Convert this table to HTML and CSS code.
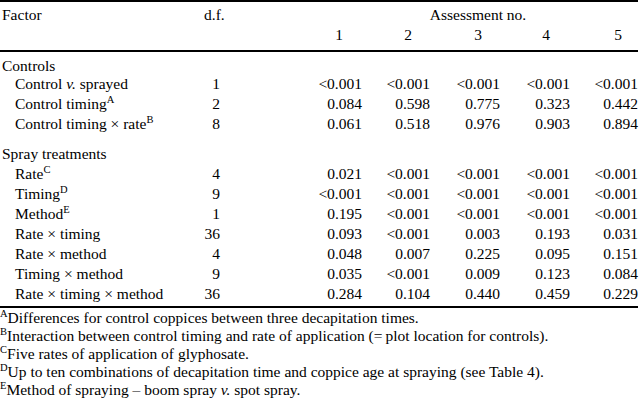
FILE: index.html
```html
<!DOCTYPE html>
<html>
<head>
<meta charset="utf-8">
<link rel="stylesheet" href="styles.css">
</head>
<body>
<table class="anova">
<colgroup>
<col class="w-factor"><col class="w-df"><col class="w-c1"><col class="w-c2"><col class="w-c3"><col class="w-c4"><col class="w-c5">
</colgroup>
<thead>
<tr class="h1"><th class="factor">Factor</th><th class="dfh">d.f.</th><th class="span" colspan="5">Assessment no.</th></tr>
<tr class="h2"><th></th><th></th><th class="n1">1</th><th class="n2">2</th><th class="n3">3</th><th class="n4">4</th><th class="n5">5</th></tr>
</thead>
<tbody>
<tr class="group first"><td colspan="7">Controls</td></tr>
<tr><td class="sub">Control <i>v.</i> sprayed</td><td class="df">1</td><td>&lt;0.001</td><td>&lt;0.001</td><td>&lt;0.001</td><td>&lt;0.001</td><td>&lt;0.001</td></tr>
<tr><td class="sub">Control timing<sup>A</sup></td><td class="df">2</td><td>0.084</td><td>0.598</td><td>0.775</td><td>0.323</td><td>0.442</td></tr>
<tr><td class="sub">Control timing &times; rate<sup>B</sup></td><td class="df">8</td><td>0.061</td><td>0.518</td><td>0.976</td><td>0.903</td><td>0.894</td></tr>
<tr class="group"><td colspan="7">Spray treatments</td></tr>
<tr><td class="sub">Rate<sup>C</sup></td><td class="df">4</td><td>0.021</td><td>&lt;0.001</td><td>&lt;0.001</td><td>&lt;0.001</td><td>&lt;0.001</td></tr>
<tr><td class="sub">Timing<sup>D</sup></td><td class="df">9</td><td>&lt;0.001</td><td>&lt;0.001</td><td>&lt;0.001</td><td>&lt;0.001</td><td>&lt;0.001</td></tr>
<tr><td class="sub">Method<sup>E</sup></td><td class="df">1</td><td>0.195</td><td>&lt;0.001</td><td>&lt;0.001</td><td>&lt;0.001</td><td>&lt;0.001</td></tr>
<tr><td class="sub">Rate &times; timing</td><td class="df">36</td><td>0.093</td><td>&lt;0.001</td><td>0.003</td><td>0.193</td><td>0.031</td></tr>
<tr><td class="sub">Rate &times; method</td><td class="df">4</td><td>0.048</td><td>0.007</td><td>0.225</td><td>0.095</td><td>0.151</td></tr>
<tr><td class="sub">Timing &times; method</td><td class="df">9</td><td>0.035</td><td>&lt;0.001</td><td>0.009</td><td>0.123</td><td>0.084</td></tr>
<tr class="last"><td class="sub">Rate &times; timing &times; method</td><td class="df">36</td><td>0.284</td><td>0.104</td><td>0.440</td><td>0.459</td><td>0.229</td></tr>
</tbody>
</table>
<div class="notes">
<p><sup>A</sup>Differences for control coppices between three decapitation times.</p>
<p><sup>B</sup>Interaction between control timing and rate of application (=&thinsp;plot location for controls).</p>
<p><sup>C</sup>Five rates of application of glyphosate.</p>
<p><sup>D</sup>Up to ten combinations of decapitation time and coppice age at spraying (see Table 4).</p>
<p><sup>E</sup>Method of spraying &ndash; boom spray <i>v.</i> spot spray.</p>
</div>
</body>
</html>
```

FILE: styles.css
```css
html, body {
  margin: 0;
  padding: 0;
  background: #fff;
}
body {
  font-family: "Liberation Serif", "Times New Roman", serif;
  font-size: 15.5px;
  color: #000;
  width: 640px;
}
.anova {
  border-collapse: collapse;
  table-layout: fixed;
  width: 638px;
  border-top: 2px solid #000;
  border-bottom: 2px solid #000;
}
.w-factor { width: 200px; }
.w-df { width: 20px; }
.w-c1 { width: 142px; }
.w-c2 { width: 68px; }
.w-c3 { width: 70px; }
.w-c4 { width: 70px; }
.w-c5 { width: 68px; }

.anova th, .anova td {
  padding: 0;
  font-weight: normal;
  white-space: nowrap;
  line-height: 20px;
  height: 20px;
}
.anova td { text-align: right; }
.anova thead th { text-align: right; }
.anova .h1 th { padding-top: 3px; }
.anova .h2 th { padding-bottom: 5px; }
.anova thead { border-bottom: 2px solid #000; }
.anova th.factor { text-align: left; padding-left: 2px; }
.anova th.dfh { text-align: left; padding-left: 4px; overflow: visible; }
.anova th.span { text-align: center; padding-left: 98px; }
.anova th.n1 { padding-right: 19px; }
.anova th.n2 { padding-right: 18px; }
.anova th.n3 { padding-right: 18px; }
.anova th.n4 { padding-right: 20px; }
.anova th.n5 { padding-right: 16px; }

.anova tr.group td {
  text-align: left;
  padding-left: 2px;
  padding-top: 10px;
}
.anova tr.group.first td {
  padding-top: 6px;
  line-height: 16px;
  height: 16px;
}
.anova td.sub { text-align: left; padding-left: 15px; }
.anova td.df { text-align: right; }
.anova tr.last td { padding-bottom: 2px; }

sup {
  font-size: 10.5px;
  line-height: 0;
  vertical-align: 6px;
}
.notes {
  padding-top: 1px;
}
.notes p {
  margin: 0;
  line-height: 18px;
  white-space: nowrap;
}
```
